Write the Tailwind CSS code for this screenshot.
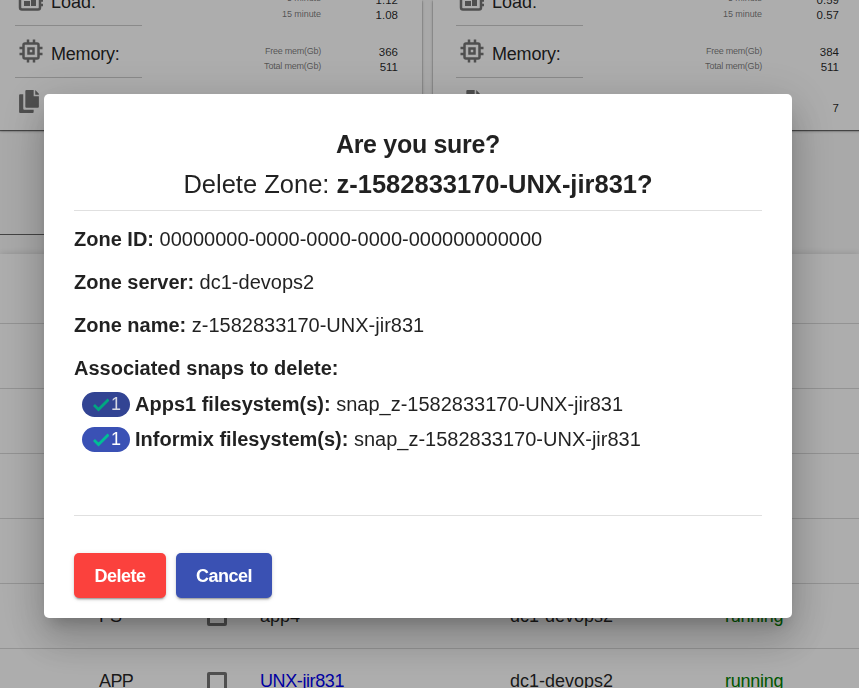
<!DOCTYPE html>
<html lang="en">
<head>
<meta charset="utf-8">
<title>Delete zone</title>
<script src="https://cdn.jsdelivr.net/npm/@tailwindcss/browser@4"></script>
</head>
<body class="h-[688px] w-[859px] overflow-hidden bg-[#fafafa] font-['Liberation_Sans',Arial,sans-serif] text-black/87">
<svg class="hidden">
  <symbol id="chip" viewBox="0 0 24 24"><g fill="none" stroke="currentColor" stroke-width="2.500"><rect x="4.500" y="4.500" width="15" height="15" rx="1.500"/><rect x="9.500" y="9.500" width="5" height="5"/><path d="M9 .5v3.500M15 .5v3.500M9 20v3.500M15 20v3.500M.5 9h3.500M.5 15h3.500M20 9h3.500M20 15h3.500"/></g></symbol>
  <symbol id="load" viewBox="0 0 26 24"><path fill="none" stroke="currentColor" stroke-width="2.500" d="M4 3.500h16q2 0 2 2v14q0 2-2 2H4q-2 0-2-2v-14q0-2 2-2zM22 8h3M22 12.500h3M22 17h3"/><path fill="currentColor" d="M6 13h6v5H6zm7-6h5v3h-5zM6 7h6v5H6zm7 4h5v7h-5z"/></symbol>
  <symbol id="files" viewBox="0 0 24 24"><path fill="currentColor" d="M9 1h7v6h5v10q0 1-1 1H9q-1 0-1-1V2q0-1 1-1zM17.500 1L21 4.500V5.500H17.500zM3 5h3v14q0 1 1 1h9v2q0 1-1 1H3q-1 0-1-1V6q0-1 1-1z"/></symbol>
  <symbol id="check" viewBox="0 0 16 14"><path fill="none" stroke="currentColor" stroke-width="2.800" d="M1 7L5.500 11.500L15.500 1.500"/></symbol>
</svg>

<main class="h-[688px] overflow-hidden">
  <section class="flex h-[130px] gap-[11px]">
    <article class="flex h-[130px] w-[422px] shrink-0 justify-between bg-white pr-6 pl-[15px] shadow-[0_1px_1px_rgba(0,0,0,.5),0_1px_3px_rgba(0,0,0,.3)]">
      <div class="w-[127px]">
        <div class="flex h-[26px] items-start border-b border-black/20"><svg class="-mt-[12px] ml-[3px] h-6 w-[26px] text-[#757575]"><use href="#load"/></svg><span class="-mt-[8px] ml-[7px] text-[18px] leading-5">Load:</span></div>
        <div class="flex h-[52px] items-start border-b border-black/20 pt-[11px]"><svg class="mt-[2px] ml-[4px] size-6 text-[#757575]"><use href="#chip"/></svg><span class="mt-[7px] ml-[8px] text-[18px] leading-5 tracking-[-0.2px]">Memory:</span></div>
        <svg class="mt-[11px] ml-[2px] size-[25px] text-[#757575]"><use href="#files"/></svg>
      </div>
      <div class="grid h-[120px] grid-cols-[58px_77px] grid-rows-[7px_17px_21px_15px_16px_26px_16px] items-center text-right text-[11.500px] [&>i]:text-[9px] [&>i]:whitespace-nowrap [&>i]:not-italic [&>i]:text-black/54">
        <i class="-mt-[9px] tracking-[-0.05px]">5 minute</i><b class="-mt-[6px] font-normal">1.12</b>
        <i class="-mt-[2px] tracking-[-0.05px]">15 minute</i><b class="font-normal">1.08</b>
        <span></span><span></span>
        <i class="-mt-px tracking-[-0.25px]">Free mem(Gb)</i><b class="font-normal">366</b>
        <i class="-mt-[3px] tracking-[-0.2px]">Total mem(Gb)</i><b class="font-normal">511</b>
      </div>
    </article>
    <article class="flex h-[130px] w-[430px] shrink-0 justify-between bg-white pr-6 pl-[23px] shadow-[0_1px_1px_rgba(0,0,0,.5),0_1px_3px_rgba(0,0,0,.3)]">
      <div class="w-[127px]">
        <div class="flex h-[26px] items-start border-b border-black/20"><svg class="-mt-[12px] ml-[3px] h-6 w-[26px] text-[#757575]"><use href="#load"/></svg><span class="-mt-[8px] ml-[7px] text-[18px] leading-5">Load:</span></div>
        <div class="flex h-[52px] items-start border-b border-black/20 pt-[11px]"><svg class="mt-[2px] ml-[4px] size-6 text-[#757575]"><use href="#chip"/></svg><span class="mt-[7px] ml-[8px] text-[18px] leading-5 tracking-[-0.2px]">Memory:</span></div>
        <svg class="mt-[11px] ml-[2px] size-[25px] text-[#757575]"><use href="#files"/></svg>
      </div>
      <div class="grid h-[120px] grid-cols-[58px_77px] grid-rows-[7px_17px_21px_15px_16px_25px_16px] items-center text-right text-[11.500px] [&>i]:text-[9px] [&>i]:whitespace-nowrap [&>i]:not-italic [&>i]:text-black/54">
        <i class="-mt-[9px] tracking-[-0.05px]">5 minute</i><b class="-mt-[6px] font-normal">0.59</b>
        <i class="-mt-[2px] tracking-[-0.05px]">15 minute</i><b class="font-normal">0.57</b>
        <span></span><span></span>
        <i class="-mt-px tracking-[-0.25px]">Free mem(Gb)</i><b class="font-normal">384</b>
        <i class="-mt-[3px] tracking-[-0.2px]">Total mem(Gb)</i><b class="font-normal">511</b>
        <span></span><span></span>
        <span></span><b class="font-normal">7</b>
      </div>
    </article>
  </section>
  <div class="mt-[104px] h-px w-[400px] bg-black/60"></div>
  <section class="mt-[19px] bg-white shadow-[0_2px_1px_-1px_rgba(0,0,0,.2),0_1px_1px_rgba(0,0,0,.14),0_1px_8px_rgba(0,0,0,.2)]">
    <div class="h-[70px] border-b border-black/15"></div>
    <div class="h-[65px] border-b border-black/15"></div>
    <div class="h-[65px] border-b border-black/15"></div>
    <div class="h-[65px] border-b border-black/15"></div>
    <div class="h-[65px] border-b border-black/15"></div>
    <div class="grid h-[65px] grid-cols-[108px_53px_250px_215px_1fr] items-center border-b border-black/15 pl-[99px] text-[18px]"><span>FS</span><span class="size-5 rounded-[2px] border-[3px] border-[#757575]"></span><span>app4</span><span>dc1-devops2</span><span class="tracking-[-0.25px] text-[#008000]">running</span></div>
    <div class="grid h-[65px] grid-cols-[108px_53px_250px_215px_1fr] items-center pl-[99px] text-[18px]"><span class="tracking-[-0.6px]">APP</span><span class="size-5 rounded-[2px] border-[3px] border-[#757575]"></span><span class="tracking-[-0.4px] text-[#0000ee]">UNX-jir831</span><span>dc1-devops2</span><span class="tracking-[-0.25px] text-[#008000]">running</span></div>
  </section>
</main>

<div class="fixed inset-0 bg-black/32 pt-[94px] pl-[44px]">
  <div role="dialog" class="h-[524px] w-[748px] rounded-[5px] bg-white px-[30px] pt-[30px] text-[20px] leading-[23px] shadow-[0_11px_15px_-7px_rgba(0,0,0,.2),0_24px_38px_3px_rgba(0,0,0,.14),0_9px_46px_8px_rgba(0,0,0,.12)]">
    <h1 class="border-b border-black/12 pb-[6px] text-center text-[25px] leading-10"><b class="block tracking-[-0.3px]">Are you sure?</b><span class="text-[25.500px] whitespace-nowrap">Delete Zone: <b>z-1582833170-UNX-jir831?</b></span></h1>
    <div class="mt-[17px] flex h-[132px] flex-col gap-5">
      <p><b>Zone ID:</b> 00000000-0000-0000-0000-000000000000</p>
      <p><b>Zone server:</b> dc1-devops2</p>
      <p><b>Zone name:</b> z-1582833170-UNX-jir831</p>
      <p><b>Associated snaps to delete:</b></p>
    </div>
    <ul class="mt-[32px] flex h-[124px] flex-col gap-[10px] border-b border-black/12 pl-2">
      <li class="flex h-[25px] items-center gap-[5px]"><span class="flex h-[25px] w-12 items-center justify-center gap-[2px] rounded-full bg-[#324493] pl-[2px] text-[18px] text-[#d5d7e3]"><svg class="h-[14px] w-4 text-[#00a780]"><use href="#check"/></svg>1</span><p><b>Apps1 filesystem(s):</b> snap_z-1582833170-UNX-jir831</p></li>
      <li class="flex h-[25px] items-center gap-[5px]"><span class="flex h-[25px] w-12 items-center justify-center gap-[2px] rounded-full bg-[#3a51b5] pl-[2px] text-[18px] text-white"><svg class="h-[14px] w-4 text-[#00bf95]"><use href="#check"/></svg>1</span><p><b>Informix filesystem(s):</b> snap_z-1582833170-UNX-jir831</p></li>
    </ul>
    <div class="mt-[37px] flex gap-[10px] text-[18px] font-bold tracking-[-0.5px] text-white">
      <button class="h-[45px] w-[92px] rounded-[5px] bg-[#fb413d] pt-px shadow-[0_3px_1px_-2px_rgba(0,0,0,.2),0_2px_2px_rgba(0,0,0,.14),0_1px_5px_rgba(0,0,0,.12)]">Delete</button>
      <button class="h-[45px] w-[96px] rounded-[5px] bg-[#3a51b3] pt-px shadow-[0_3px_1px_-2px_rgba(0,0,0,.2),0_2px_2px_rgba(0,0,0,.14),0_1px_5px_rgba(0,0,0,.12)]">Cancel</button>
    </div>
  </div>
</div>
</body>
</html>
